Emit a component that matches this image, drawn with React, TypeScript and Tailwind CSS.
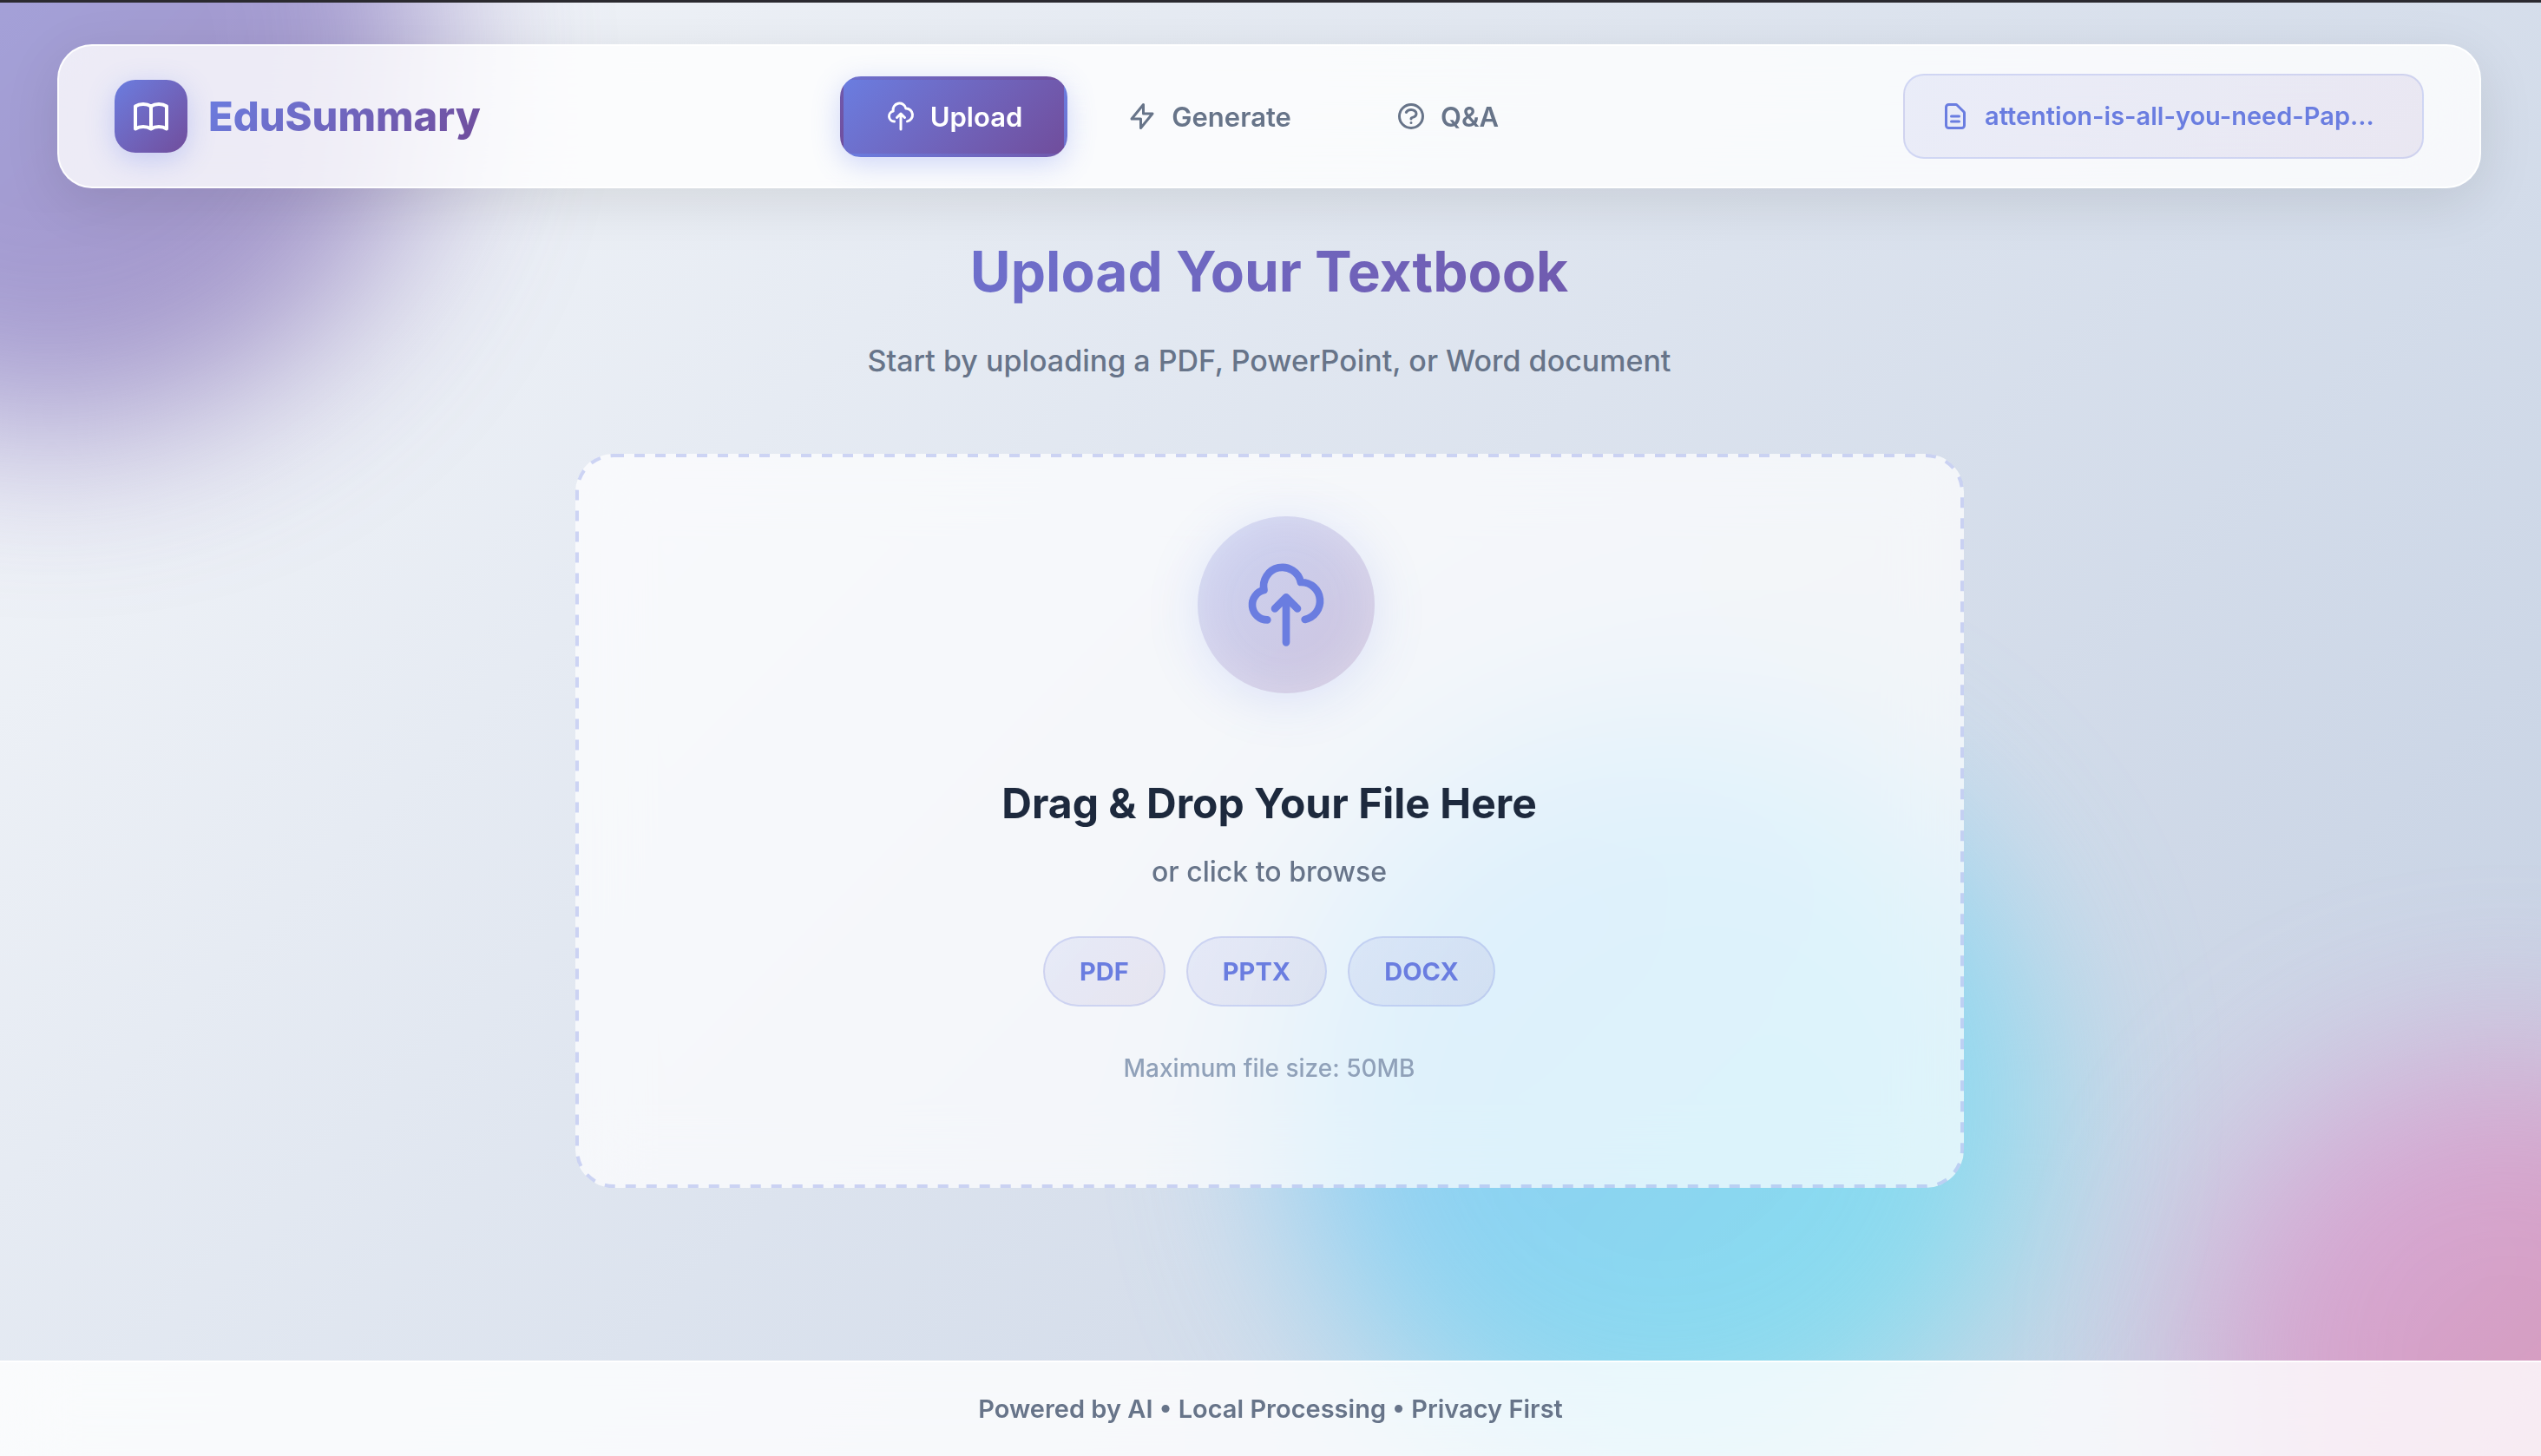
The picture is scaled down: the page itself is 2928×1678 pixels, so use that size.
import type { ReactNode } from "react";

const icons = {
  book: "M12 6.253v13m0-13C10.832 5.477 9.246 5 7.5 5S4.168 5.477 3 6.253v13C4.168 18.477 5.754 18 7.5 18s3.332.477 4.5 1.253m0-13C13.168 5.477 14.754 5 16.5 5c1.747 0 3.332.477 4.5 1.253v13C19.832 18.477 18.247 18 16.5 18c-1.746 0-3.332.477-4.5 1.253",
  upload:
    "M7 16a4 4 0 01-.88-7.903A5 5 0 1115.9 6L16 6a5 5 0 011 9.9M15 13l-3-3m0 0l-3 3m3-3v12",
  bolt: "M13 10V3L4 14h7v7l9-11h-7z",
  question:
    "M8.228 9c.549-1.165 2.03-2 3.772-2 2.21 0 4 1.343 4 3 0 1.4-1.278 2.575-3.006 2.907-.542.104-.994.54-.994 1.093m0 3h.01M21 12a9 9 0 11-18 0 9 9 0 0118 0z",
  document:
    "M9 12h6m-6 4h6m2 5H7a2 2 0 01-2-2V5a2 2 0 012-2h5.586a1 1 0 01.707.293l5.414 5.414a1 1 0 01.293.707V19a2 2 0 01-2 2z",
};

function Icon({ name, className }: { name: keyof typeof icons; className: string }) {
  return (
    <svg
      viewBox="0 0 24 24"
      fill="none"
      stroke="currentColor"
      strokeWidth={2}
      strokeLinecap="round"
      strokeLinejoin="round"
      aria-hidden="true"
      className={"shrink-0 " + className}
    >
      <path d={icons[name]} />
    </svg>
  );
}

function NavButton({
  icon,
  active = false,
  children,
}: {
  icon: keyof typeof icons;
  active?: boolean;
  children: ReactNode;
}) {
  return (
    <button
      type="button"
      aria-current={active ? "page" : undefined}
      className={
        "flex items-center gap-4 rounded-3xl border-4 border-transparent px-12 py-6 text-[31px] leading-[37px] font-semibold " +
        (active
          ? "bg-linear-135 from-[#6a7de0] to-[#704d9c] text-white shadow-[0_8px_32px_rgba(102,126,234,0.3)]"
          : "text-[#677489]")
      }
    >
      <Icon name={icon} className="size-9" />
      {children}
    </button>
  );
}

function Backdrop() {
  return (
    <div aria-hidden="true" className="absolute inset-0 -z-10 overflow-hidden">
      <div className="absolute -top-[380px] -left-[380px] size-[880px] rounded-full bg-linear-135 from-[#6a7de0] to-[#704d9c] opacity-60 blur-[100px]" />
      <div className="absolute -right-[320px] -bottom-[250px] size-[720px] rounded-full bg-linear-135 from-[#dc95e0] to-[#e5657f] opacity-60 blur-[100px]" />
      <div className="absolute -bottom-[30px] left-[1480px] size-[870px] rounded-full bg-linear-135 from-[#63b4fa] to-[#56ecf2] opacity-60 blur-[100px]" />
    </div>
  );
}

export default function App() {
  return (
    <div className="relative isolate flex min-h-screen flex-col bg-linear-135 from-[#f5f7fa] to-[#c3cfe2] font-['Inter',sans-serif]">
      <Backdrop />
      <div className="h-[3px] bg-[#2b2a30]" />

      <div className="pr-[3px]">
        <header className="mx-[66px] mt-12 flex items-center justify-between rounded-[40px] border-2 border-white/90 bg-white/80 px-16 py-8 shadow-[0_16px_64px_rgba(0,0,0,0.1)] backdrop-blur-[40px]">
          <div className="flex items-center gap-6">
            <div className="flex size-[84px] items-center justify-center rounded-3xl bg-linear-135 from-[#6a7de0] to-[#704d9c] text-white shadow-[0_8px_32px_rgba(102,126,234,0.3)]">
              <Icon name="book" className="size-12" />
            </div>
            <span className="bg-linear-135 from-[#6a7de0] to-[#704d9c] bg-clip-text text-[47px] leading-[58px] font-extrabold text-transparent">
              EduSummary
            </span>
          </div>

          <nav className="flex gap-4">
            <NavButton icon="upload" active>
              Upload
            </NavButton>
            <NavButton icon="bolt">Generate</NavButton>
            <NavButton icon="question">Q&amp;A</NavButton>
          </nav>

          <div className="flex items-center gap-4 rounded-3xl border-2 border-[#6a7de0]/20 bg-linear-135 from-[#6a7de0]/10 to-[#704d9c]/10 px-10 py-[29px] text-[29px] leading-9 font-semibold text-[#6a7de0]">
            <Icon name="document" className="size-9" />
            <span className="w-[464px] truncate">attention-is-all-you-need-Pap...</span>
          </div>
        </header>

        <main className="mx-auto mt-[54px] flex w-[1600px] max-w-full flex-col items-center">
          <h1 className="w-full bg-linear-135 from-[#6a7de0] to-[#704d9c] bg-clip-text text-center text-[64px] leading-[84px] font-bold text-transparent">
            Upload Your Textbook
          </h1>
          <p className="mt-10 text-[34px] leading-[42px] font-medium text-[#677489]">
            Start by uploading a PDF, PowerPoint, or Word document
          </p>

          <button
            type="button"
            className="relative mt-[86px] flex w-full flex-col items-center rounded-[44px] bg-white/70 pt-[72px] pb-[120px] font-medium backdrop-blur-[40px]"
          >
            <svg aria-hidden="true" className="absolute inset-0 size-full">
              <rect
                x="2"
                y="2"
                rx="42"
                fill="none"
                stroke="#6a7de0"
                strokeOpacity="0.3"
                strokeWidth="4"
                strokeDasharray="12 12"
                className="h-[calc(100%-4px)] w-[calc(100%-4px)]"
              />
            </svg>
            <span className="ml-[38px] flex size-[204px] items-center justify-center rounded-full bg-linear-135 from-[#6a7de0]/30 to-[#704d9c]/30 text-[#6a7de0] shadow-[0_8px_60px_rgba(102,126,234,0.18),inset_0_0_50px_rgba(255,255,255,0.3)]">
              <Icon name="upload" className="size-[104px]" />
            </span>
            <span className="mt-[98px] text-[48px] leading-[58px] font-bold text-slate-800">
              Drag &amp; Drop Your File Here
            </span>
            <span className="mt-[30px] text-[32px] leading-10 text-[#677489]">
              or click to browse
            </span>
            <span className="mt-[54px] flex gap-6 text-[29px] leading-[37px] font-bold text-[#6a7de0]">
              {["PDF", "PPTX", "DOCX"].map((type) => (
                <span
                  key={type}
                  className="rounded-full border-2 border-[#6a7de0]/20 bg-linear-135 from-[#6a7de0]/10 to-[#704d9c]/10 px-10 py-5"
                >
                  {type}
                </span>
              ))}
            </span>
            <span className="mt-[53px] text-[28px] leading-9 text-slate-400">
              Maximum file size: 50MB
            </span>
          </button>
        </main>
      </div>

      <footer className="mt-auto border-t-2 border-white/90 bg-white/80 py-9 text-center text-[29px] leading-9 font-semibold text-[#677489] backdrop-blur-[40px]">
        Powered by AI • Local Processing • Privacy First
      </footer>
    </div>
  );
}
